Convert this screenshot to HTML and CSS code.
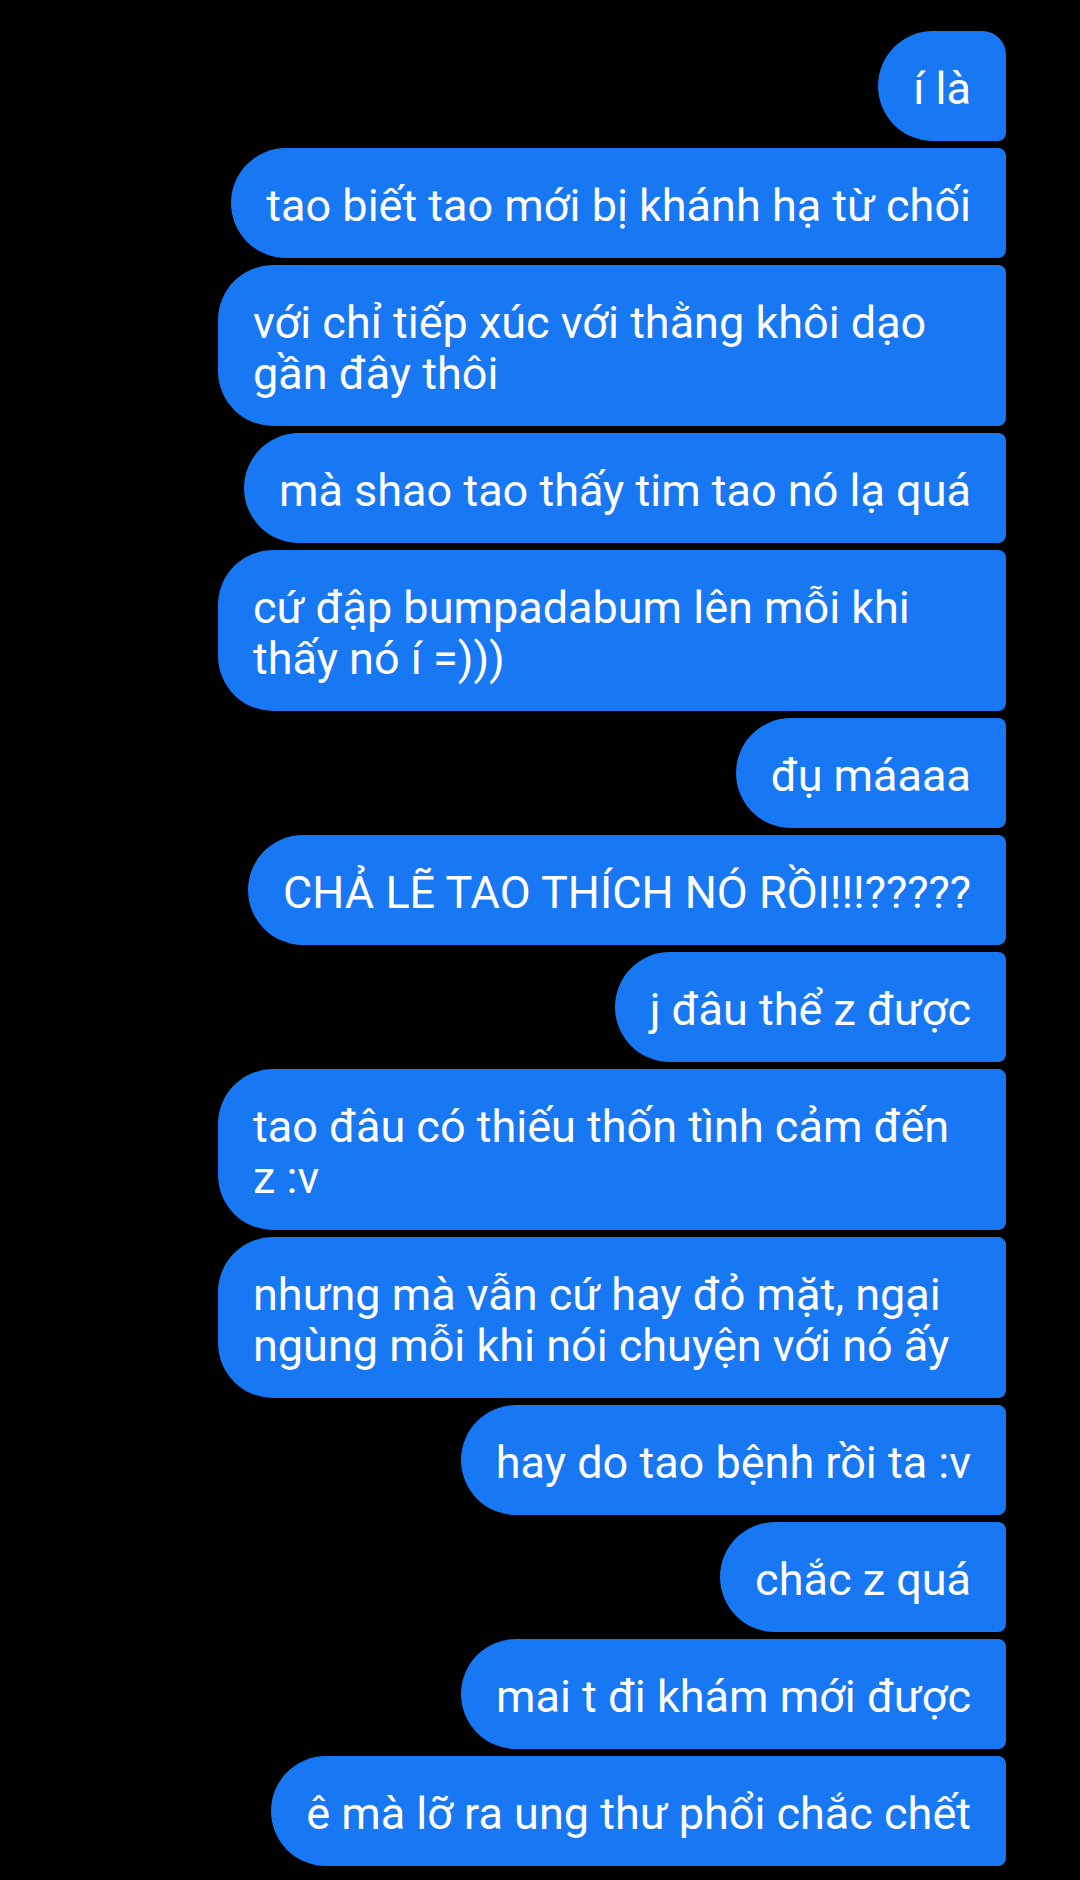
FILE: index.html
```html
<!DOCTYPE html>
<html lang="vi">
<head>
<meta charset="utf-8">
<title>Chat</title>
<link rel="stylesheet" href="styles.css">
</head>
<body>
<main class="thread">
  <div class="msg first">í là</div>
  <div class="msg">tao biết tao mới bị khánh hạ từ chối</div>
  <div class="msg">với chỉ tiếp xúc với thằng khôi dạo gần đây thôi</div>
  <div class="msg">mà shao tao thấy tim tao nó lạ quá</div>
  <div class="msg">cứ đập bumpadabum lên mỗi khi thấy nó í =)))</div>
  <div class="msg">đụ máaaa</div>
  <div class="msg">CHẢ LẼ TAO THÍCH NÓ RỒI!!!?????</div>
  <div class="msg">j đâu thể z được</div>
  <div class="msg">tao đâu có thiếu thốn tình cảm đến z :v</div>
  <div class="msg">nhưng mà vẫn cứ hay đỏ mặt, ngại ngùng mỗi khi nói chuyện với nó ấy</div>
  <div class="msg">hay do tao bệnh rồi ta :v</div>
  <div class="msg">chắc z quá</div>
  <div class="msg">mai t đi khám mới được</div>
  <div class="msg">ê mà lỡ ra ung thư phổi chắc chết</div>
</main>
</body>
</html>
```
FILE: styles.css
```css
html, body {
  margin: 0;
  padding: 0;
  background: #000;
}
body {
  width: 1080px;
  height: 1880px;
  overflow: hidden;
  font-family: Roboto, "Noto Sans", "Liberation Sans", sans-serif;
}
.thread {
  display: flex;
  flex-direction: column;
  align-items: flex-end;
  gap: 7px;
  padding: 31px 74px 0 0;
}
.msg {
  box-sizing: border-box;
  max-width: 788px;
  background: #1877f2;
  color: #fff;
  font-size: 45px;
  line-height: 51px;
  padding: 32px 35px 27px 35px;
  border-radius: 55px 8px 8px 55px;
}
.msg.first {
  border-top-right-radius: 24px;
}
```
